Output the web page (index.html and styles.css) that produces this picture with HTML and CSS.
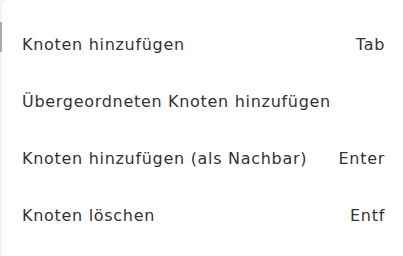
FILE: index.html
```html
<!DOCTYPE html>
<html lang="de">
<head>
  <meta charset="UTF-8">
  <meta name="viewport" content="width=device-width, initial-scale=1.0">
  <title>Kontextmenü</title>
  <link rel="stylesheet" href="styles.css">
</head>
<body>
  <div class="wrap">
    <div class="track"><span class="thumb"></span></div>
    <ul class="menu">
      <li class="item"><span class="label">Knoten hinzufügen</span><span class="key">Tab</span></li>
      <li class="item"><span class="label">Übergeordneten Knoten hinzufügen</span></li>
      <li class="item"><span class="label">Knoten hinzufügen (als Nachbar)</span><span class="key">Enter</span></li>
      <li class="item"><span class="label">Knoten löschen</span><span class="key">Entf</span></li>
    </ul>
  </div>
</body>
</html>
```

FILE: styles.css
```css
html, body{
  margin: 0;
  padding: 0;
  height: 100%;
}

body{
  background-color: #f3f3f6;
  font-family: "DejaVu Sans", "Noto Sans", sans-serif;
  color: #333;
}

ul{
  padding: 0;
  margin: 0;
  list-style: none;
}

.wrap{
  display: flex;
  height: 100%;
}

.track{
  width: 2px;
  padding-top: 22px;
}

.thumb{
  display: block;
  width: 2px;
  height: 30px;
  background-color: #a9a9bb;
}

.menu{
  flex: 1;
  background-color: #fff;
  border-top-left-radius: 6px;
  padding: 16px 18px 0 20px;
}

.menu .item{
  display: flex;
  align-items: center;
  justify-content: space-between;
  height: 57px;
  font-size: 16px;
  letter-spacing: 0.7px;
}
```
